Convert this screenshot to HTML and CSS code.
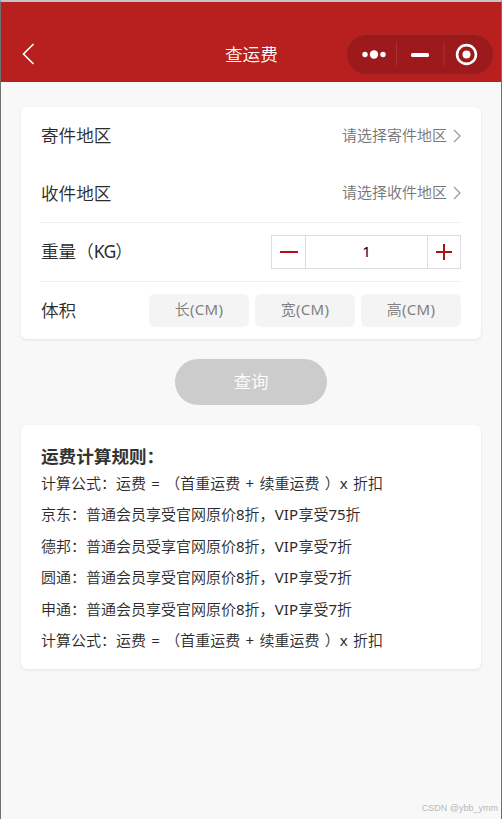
FILE: index.html
```html
<!DOCTYPE html>
<html lang="zh-CN">
<head>
<meta charset="utf-8">
<title>查运费</title>
<link rel="stylesheet" href="styles.css">
</head>
<body>
<div class="page">
  <header class="navbar">
    <svg class="back" width="14" height="22" viewBox="0 0 14 22"><path d="M12.5 1 2.500 11l10 10" fill="none" stroke="#fff" stroke-width="1.600"/></svg>
    <h1 class="title">查运费</h1>
    <div class="capsule">
      <svg width="148" height="40" viewBox="0 0 148 40">
        <path d="M50.5 8.500v23M98 8.500v23" stroke="#ad3032" stroke-width="1"/>
        <g fill="#fff"><circle cx="19" cy="20.500" r="2.700"/><circle cx="28" cy="20.500" r="4.200"/><circle cx="37" cy="20.500" r="2.700"/><rect x="65" y="19" width="18" height="4" rx="1.500"/><circle cx="120.500" cy="20.500" r="4"/></g>
        <circle cx="120.500" cy="20.500" r="9.400" fill="none" stroke="#fff" stroke-width="2.600"/>
      </svg>
    </div>
  </header>
  <main>
    <section class="card form">
      <div class="row pick">
        <span class="label">寄件地区</span>
        <span class="value">请选择寄件地区</span>
        <svg class="chevron" width="8" height="14" viewBox="0 0 8 14"><path d="M1 1l6 6-6 6" fill="none" stroke="#999" stroke-width="1.200"/></svg>
      </div>
      <div class="row pick second">
        <span class="label">收件地区</span>
        <span class="value">请选择收件地区</span>
        <svg class="chevron" width="8" height="14" viewBox="0 0 8 14"><path d="M1 1l6 6-6 6" fill="none" stroke="#999" stroke-width="1.200"/></svg>
      </div>
      <div class="row weight">
        <span class="label">重量（<b class="unit">KG</b>）</span>
        <div class="stepper">
          <span class="step"><svg width="18" height="18" viewBox="0 0 18 18"><path d="M0 9h18" stroke="#b01015" stroke-width="2"/></svg></span>
          <span class="count">1</span>
          <span class="step plus"><svg width="18" height="18" viewBox="0 0 18 18"><path d="M1 9h16M9 1v16" stroke="#b01015" stroke-width="2"/></svg></span>
        </div>
      </div>
      <div class="row volume">
        <span class="label">体积</span>
        <div class="sizes">
          <span class="size">长<b>(CM)</b></span>
          <span class="size">宽<b>(CM)</b></span>
          <span class="size">高<b>(CM)</b></span>
        </div>
      </div>
    </section>
    <div class="submit">查询</div>
    <section class="card rules">
      <h2>运费计算规则：</h2>
      <p class="formula">计算公式：运费 <b>=</b> （首重运费 <b>+</b> 续重运费 ）<b>x</b> 折扣</p>
      <p>京东：普通会员享受官网原价<b>8</b>折，<b class="vip">VIP</b>享受<b>75</b>折</p>
      <p>德邦：普通会员受享官网原价<b>8</b>折，<b class="vip">VIP</b>享受<b>7</b>折</p>
      <p>圆通：普通会员享受官网原价<b>8</b>折，<b class="vip">VIP</b>享受<b>7</b>折</p>
      <p>申通：普通会员享受官网原价<b>8</b>折，<b class="vip">VIP</b>享受<b>7</b>折</p>
      <p class="formula">计算公式：运费 <b>=</b> （首重运费 <b>+</b> 续重运费 ）<b>x</b> 折扣</p>
    </section>
  </main>
  <footer class="credit">CSDN @ybb_ymm</footer>
</div>
</body>
</html>
```
FILE: styles.css
```css
* { box-sizing: border-box; }
body {
  margin: 0;
  font-family: "Noto Sans", "Noto Sans CJK SC", sans-serif;
  font-size: 15px;
  font-weight: 350;
  color: #2b2b2b;
}
/* Latin runs are set a step heavier than the Chinese text */
b { font-weight: 400; }
.page {
  display: flex;
  flex-direction: column;
  height: 819px;
  background: #f8f8f8;
  border-top: 2px solid #c5c3c8;
  border-left: 1px solid #707070;
  border-right: 1px solid #707070;
}
.navbar {
  display: grid;
  grid-template-columns: 1fr 53px 1fr;
  align-items: center;
  height: 80px;
  padding: 25px 7px 1px 20px;
  background: #b8201f;
}
.back { display: block; }
.title {
  margin: 0 0 0 -6px;
  color: #fff;
  font-size: 17.6px;
  font-weight: 350;
  line-height: 26px;
  white-space: nowrap;
}
.capsule {
  justify-self: end;
  width: 148px;
  height: 41px;
  border: 1px solid #a92728;
  border-radius: 21px;
  background: #9c1a1b;
}
.capsule svg { display: block; margin: -1px; }
main { padding: 25px 20px 0; }
.card {
  background: #fff;
  border-radius: 6px;
  box-shadow: 0 1px 3px rgba(0, 0, 0, .09);
}
.form { height: 232px; padding: 0 20px; }
.row { display: flex; align-items: center; }
.label { padding-bottom: 1px; font-size: 17.6px; line-height: 26px; }
.unit { letter-spacing: -.9px; }
.weight .label { padding-bottom: 2px; }
.pick { height: 57px; }
.second { height: 59px; border-bottom: 1px solid #eee; }
.value { margin-left: auto; padding-bottom: 2px; color: #757575; line-height: 22px; }
.chevron { margin-left: 6px; }
.weight { height: 59px; justify-content: space-between; border-bottom: 1px solid #eee; }
.stepper { display: flex; width: 190px; height: 34px; border: 1px solid #ddd; }
.step { display: flex; width: 33px; align-items: center; justify-content: center; }
.plus { width: 32px; }
.count {
  flex: 1;
  border: solid #ddd;
  border-width: 0 1px;
  color: #000040;
  font-weight: 400;
  line-height: 31px;
  text-align: center;
}
.volume { height: 57px; justify-content: space-between; }
.sizes { display: flex; gap: 6px; }
.size {
  width: 100px;
  height: 33px;
  border-radius: 6px;
  background: #f4f4f4;
  color: #808080;
  letter-spacing: .3px;
  line-height: 31px;
  text-align: center;
}
.submit {
  width: 152px;
  height: 46px;
  margin: 20px auto;
  border-radius: 23px;
  background: #ccc;
  color: #fff;
  font-size: 17.6px;
  line-height: 45px;
  text-align: center;
}
.rules { height: 244px; padding: 20px 20px 0; }
.rules h2 { margin: 0; color: #333; font-size: 17.6px; font-weight: 700; line-height: 23px; }
.rules p { margin: 0; line-height: 31.5px; white-space: nowrap; }
.rules h2 + p { margin-top: -.5px; }
.formula { word-spacing: 1.4px; }
.vip { letter-spacing: .2px; }
.credit {
  margin: auto 3px 4px auto;
  color: #b9b9b9;
  font: 9px/14px "Liberation Sans", sans-serif;
}
```
